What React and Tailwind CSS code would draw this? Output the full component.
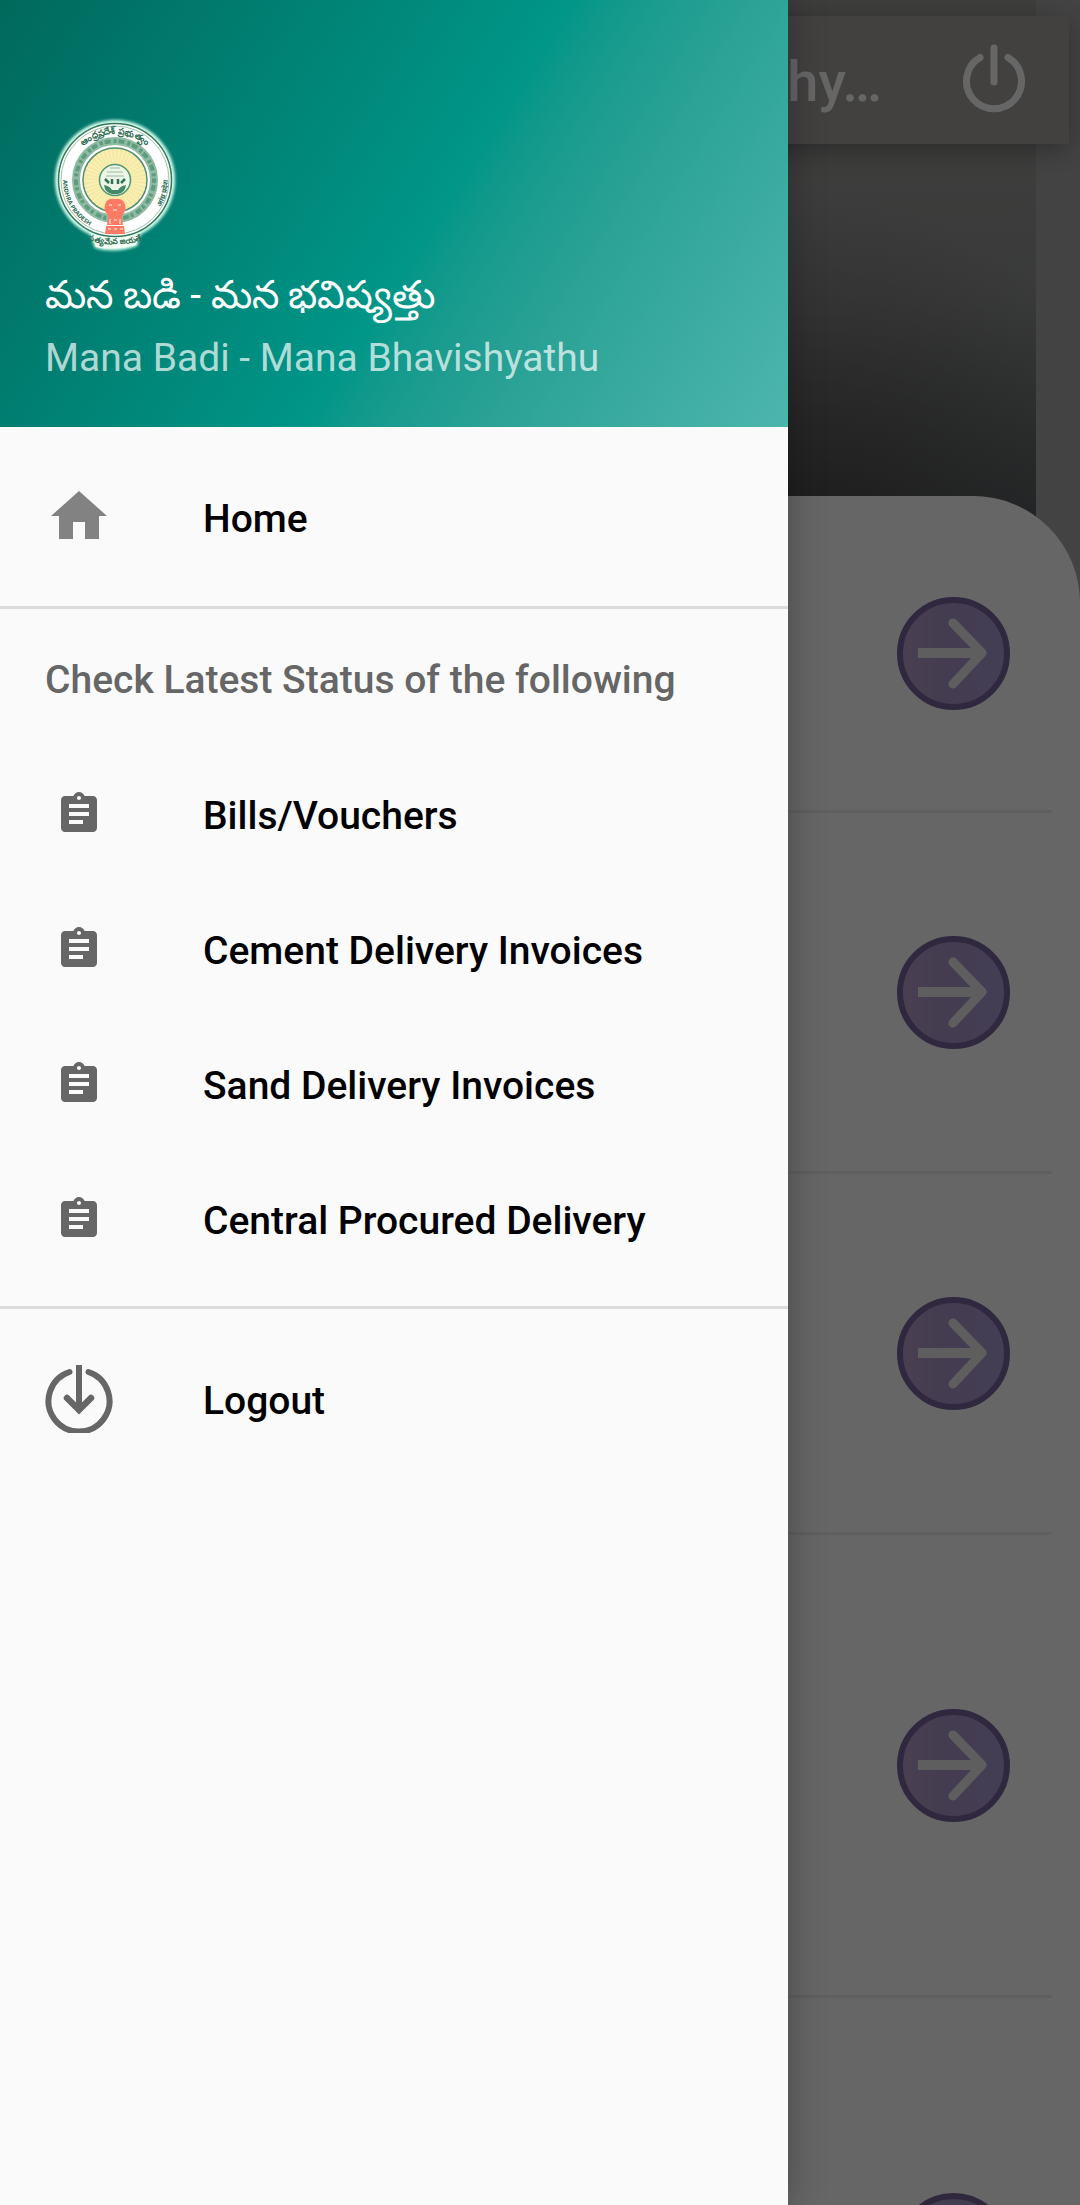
import { MdAssignment } from "react-icons/md";

const statusLinks = [
  "Bills/Vouchers",
  "Cement Delivery Invoices",
  "Sand Delivery Invoices",
  "Central Procured Delivery",
];

const rowHeights = ["h-[317px]", "h-[361px]", "h-[361px]", "h-[463px]", "h-[506px]"];

function PowerIcon() {
  return (
    <svg viewBox="0 0 64 76" className="h-[76px] w-16" fill="none" stroke="currentColor" strokeWidth="7" strokeLinecap="round">
      <path d="M18 15.5A27.5 27.5 0 1 0 46 15.5" />
      <path d="M32 6V40" />
    </svg>
  );
}

function HomeIcon() {
  return (
    <svg viewBox="0 0 68 68" className="size-[68px] text-[#828282]" fill="currentColor">
      <path d="M34 8 62 33H54V56H40V39H28V56H14V33H6Z" />
    </svg>
  );
}

function LogoutIcon() {
  return (
    <svg viewBox="0 0 68 68" className="size-[68px] text-[#666666]" fill="none" stroke="currentColor" strokeWidth="6">
      <path d="M24.500 7A30.500 30.500 0 1 0 43.500 7" strokeLinecap="round" />
      <path d="M34 0v44" />
      <path d="M22 33 34 45 46 33" strokeLinecap="round" strokeWidth="6.500" />
    </svg>
  );
}

function ArrowButton() {
  return (
    <button
      type="button"
      aria-label="Open"
      className="size-[113px] shrink-0 rounded-full border-6 border-[#75649f] bg-linear-to-r from-[#b5a0cc] via-[#ab96c8] via-35% to-[#ab9dd4]"
    >
      <svg viewBox="0 0 101 101" className="size-full" fill="none" stroke="#ececec" strokeWidth="10" strokeLinejoin="round">
        <path d="M15 50H79" />
        <path d="M50 20 79 50 50 81" strokeLinecap="round" strokeWidth="9" />
      </svg>
    </button>
  );
}

function Emblem() {
  return (
    <svg viewBox="0 0 150 150" className="size-[150px]" role="img" aria-label="Government of Andhra Pradesh">
      <defs>
        <filter id="glow" x="-20%" y="-20%" width="140%" height="140%">
          <feGaussianBlur stdDeviation="1.5" />
        </filter>
        <path id="arcTop" d="M29 70A46 46 0 0 1 121 70" />
        <path id="arcLeft" d="M23 70A52 52 0 0 0 60 120" />
        <path id="arcRight" d="M90 121A53 53 0 0 0 128 70" />
        <path id="arcBase" d="M51 131Q75 138 99 131" />
      </defs>
      <g fill="#d9fff0" filter="url(#glow)">
        <circle cx="75" cy="70" r="60" />
        <path d="M50 124H101L97 136Q75 144 55 138Z" />
      </g>
      <path d="M51 125H99L96 135Q75 141 56 137Z" fill="#f4fff8" />
      <circle cx="75" cy="70" r="56.500" fill="#fff" stroke="#34785a" strokeWidth="1.500" />
      <circle cx="75" cy="70" r="54" fill="none" stroke="#9cc4ac" strokeWidth="1" />
      <circle cx="75" cy="70" r="39" fill="none" stroke="#8fbba3" strokeWidth="8" />
      <circle cx="75" cy="70" r="39" fill="none" stroke="#5f9c7e" strokeWidth="4" strokeDasharray="3 2 6 3" />
      <circle cx="75" cy="70" r="32" fill="#f6e9a4" stroke="#4f8f70" strokeWidth="1.500" />
      <circle cx="75" cy="70" r="24" fill="none" stroke="#fbf2c2" strokeWidth="14" strokeDasharray="1 2.500" />
      <circle cx="75" cy="70" r="15.500" fill="#eef5e6" stroke="#4f9775" strokeWidth="1.500" />
      <path d="M70 58h10M67 62h16M66 66h18" stroke="#b4cfbc" strokeWidth="1.500" />
      <path d="M65 69l4 4M72 69v5M78 69v5M85 69l-4 4" stroke="#2f7456" strokeWidth="2.500" />
      <path d="M64 75q6 1 8 5h6q2-4 8-5-1 8-8 9h-6q-7-1-8-9Z" fill="#3f8a68" />
      <g fill="#ff7a62">
        <path d="M66 92q3-4 9-3 6-1 9 3 3 6 0 11l-3 4H69l-3-4q-3-5 0-11Z" />
        <path d="M68 107h14l1 8H67ZM66 116h18l1 8H65Z" />
      </g>
      <path d="M69 95h3M78 95h3M73 100h4M70 109v5M74 110h3M80 109v5M68 119h3M74 119h3M80 119h3" stroke="#ffd0c2" strokeWidth="1.500" />
      <g fill="#2f6b4f" fontFamily="'Noto Sans', sans-serif" fontWeight="700">
        <text fontSize="9" textAnchor="middle">
          <textPath href="#arcTop" startOffset="50%">ఆంధ్రప్రదేశ్ ప్రభుత్వం</textPath>
        </text>
        <text fontSize="6">
          <textPath href="#arcLeft">ANDHRA PRADESH</textPath>
        </text>
        <text fontSize="7" textAnchor="end">
          <textPath href="#arcRight" startOffset="100%">आंध्र प्रदेश</textPath>
        </text>
        <text fontSize="8" textAnchor="middle">
          <textPath href="#arcBase" startOffset="50%">సత్యమేవ జయతే</textPath>
        </text>
      </g>
    </svg>
  );
}

function DrawerLink({ label, children }) {
  return (
    <a href="#" className="flex h-[135px] items-center gap-[90px] px-[45px] font-medium text-black">
      <span className="flex w-[68px] shrink-0 justify-center">{children}</span>
      <span className="pt-1">{label}</span>
    </a>
  );
}

function Drawer() {
  return (
    <aside className="absolute inset-y-0 left-0 w-[788px] max-w-full bg-[#fafafa] text-[39px] leading-[46px] shadow-[0_0_36px_rgba(0,0,0,0.3)]">
      <header className="bg-linear-122 from-[#00695c] via-[#009688] via-54% to-[#4db6ac] px-[45px] pt-[110px] pb-[46px]">
        <div className="-ml-[5px]">
          <Emblem />
        </div>
        <p className="mt-3 leading-[46px] text-white">మన బడి - మన భవిష్యత్తు</p>
        <p className="mt-[17px] text-white/70">Mana Badi - Mana Bhavishyathu</p>
      </header>
      <nav>
        <div className="border-b-3 border-[#dcdcdc] py-[22px]">
          <DrawerLink label="Home">
            <HomeIcon />
          </DrawerLink>
        </div>
        <div className="border-b-3 border-[#dcdcdc] pb-5">
          <h2 className="flex h-[137px] items-center px-[45px] pt-1 font-medium text-[#666666]">
            Check Latest Status of the following
          </h2>
          {statusLinks.map((label) => (
            <DrawerLink key={label} label={label}>
              <MdAssignment className="size-12 text-[#666666]" />
            </DrawerLink>
          ))}
        </div>
        <div className="py-[22px]">
          <DrawerLink label="Logout">
            <LogoutIcon />
          </DrawerLink>
        </div>
      </nav>
    </aside>
  );
}

export default function App() {
  return (
    <div className="relative h-screen overflow-hidden bg-white font-['Roboto','Noto_Sans',sans-serif]">
      <div className="h-[610px] bg-[#a8a8a8] pr-11">
        <div className="h-full bg-[radial-gradient(circle_at_78%_90%,rgba(60,50,50,0.6),transparent_36%),linear-gradient(to_bottom,#9c9b99_20%,#8f9291_50%,#5f686a_85%)]">
          <header className="-mr-11 px-[11px] pt-4">
            <div className="flex h-32 items-center justify-end gap-20 bg-[#a5a4a1] pr-[43px] text-white shadow-[0_6px_24px_rgba(0,0,0,0.3)]">
              <h1 className="pt-1 text-[56px] font-medium whitespace-nowrap">Mana Badi - Mana Bhavishy…</h1>
              <button type="button" aria-label="Log out">
                <PowerIcon />
              </button>
            </div>
          </header>
        </div>
      </div>
      <main className="relative -mt-[114px] rounded-tr-[107px] bg-white pr-7">
        {rowHeights.map((height, i) => (
          <div key={i} className={`${height} flex items-center justify-end border-b-3 border-[#ededed] pr-[42px]`}>
            <ArrowButton />
          </div>
        ))}
      </main>
      <div className="absolute inset-0 bg-black/60" />
      <Drawer />
    </div>
  );
}
